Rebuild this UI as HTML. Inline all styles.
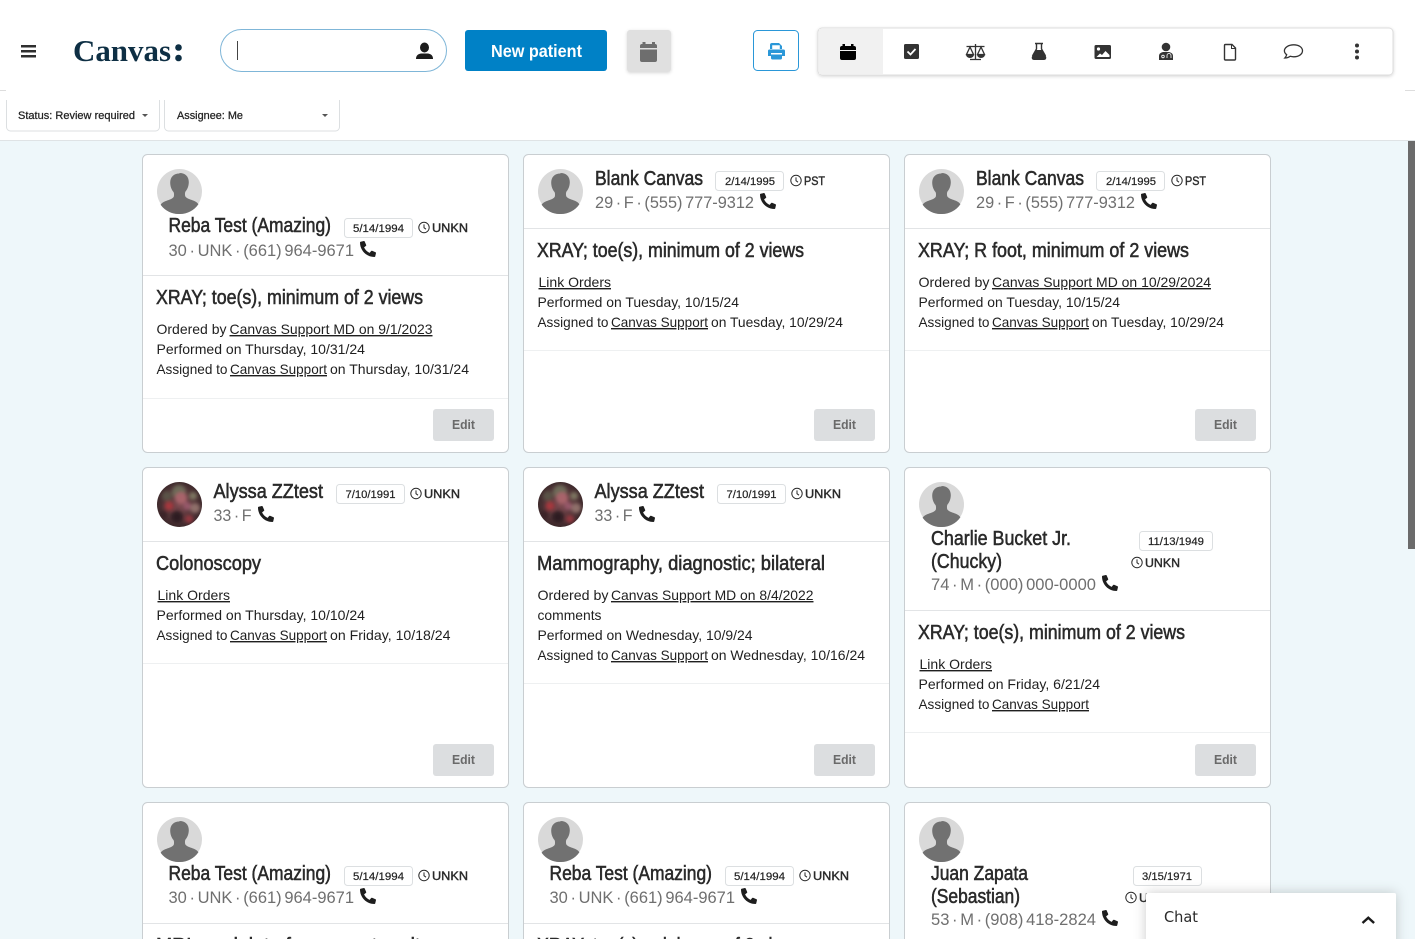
<!DOCTYPE html>
<html lang="en">
<head>
<meta charset="utf-8">
<title>Canvas</title>
<style>
html,body{margin:0;padding:0;width:1415px;height:939px;overflow:hidden;background:#eef7fa}
svg{display:block;font-family:"Liberation Sans",sans-serif}
.card{fill:#fff;stroke:#c9ced1;stroke-width:1}
.sep{stroke:#e2e4e6;stroke-width:1}
.sep2{stroke:#eef0f1;stroke-width:1}
.chip{fill:#fff;stroke:#dcdfe1;stroke-width:1}
.edit{fill:#dcdee0}
.n{font-size:20px;fill:#2a2a2a;stroke:#2a2a2a;stroke-width:.55px}
.s{font-size:17px;fill:#6f6f6f;word-spacing:-2px}
.t{font-size:20px;fill:#2a2a2a;stroke:#2a2a2a;stroke-width:.55px}
.l{font-size:14px;fill:#1f1f1f}
.u{font-size:14px;fill:#1f1f1f;text-decoration:underline}
.d{font-size:11px;fill:#222;stroke:#222;stroke-width:.2px}
.z{font-size:12px;fill:#2a2a2a;stroke:#2a2a2a;stroke-width:.4px}
.e{font-size:13px;font-weight:bold;fill:#6a6a6a}
.f{font-size:11px;fill:#222;stroke:#222;stroke-width:.25px}
</style>
</head>
<body>
<svg width="1415" height="939" viewBox="0 0 1415 939" xmlns="http://www.w3.org/2000/svg">
<defs>
<symbol id="av" viewBox="0 0 45 45">
<circle cx="22.500" cy="22.500" r="22.500" fill="#d9d9d9"/>
<path d="M22.500 4.500c-5.800 0-9.300 3.600-9.300 9 0 3.800 1.300 7.300 3.300 9.500.6.800.7 3.300.3 4.600-.5 1.500-2.800 2.600-6.300 3.800-3.400 1.200-5.600 2.400-6.900 4.300A22.500 22.500 0 0 0 22.500 45a22.500 22.500 0 0 0 18.900-9.800c-1.300-1.900-3.500-3.100-6.900-4.300-3.500-1.200-5.800-2.300-6.300-3.800-.4-1.300-.3-3.800.3-4.600 2-2.200 3.300-5.700 3.300-9.500 0-5.400-3.500-9-9.300-9z" fill="#717171"/>
</symbol>
<symbol id="ph" viewBox="0 0 512 512">
<g transform="translate(512 0) scale(-1 1)"><path fill="#1e1e1e" d="M493.400 24.600l-104-24c-11.300-2.600-22.900 3.300-27.500 13.900l-48 112c-4.200 9.800-1.400 21.300 6.900 28l60.600 49.600c-36 76.700-98.900 140.500-177.200 177.200l-49.600-60.600c-6.800-8.300-18.200-11.100-28-6.900l-112 48C3.900 366.500-2 378.100.6 389.400l24 104C27.100 504.200 36.700 512 48 512c256.100 0 464-207.500 464-464 0-11.200-7.700-20.900-18.600-23.400z"/></g>
</symbol>
<symbol id="ck" viewBox="0 0 12 12">
<circle cx="6" cy="6" r="5.200" fill="none" stroke="#2a2a2a" stroke-width="1"/>
<path d="M6 2.900V6.200L8 7.700" fill="none" stroke="#2a2a2a" stroke-width="1"/>
</symbol>
<radialGradient id="pg" cx=".5" cy=".5" r=".5"><stop offset="0" stop-color="#7d4a50"/><stop offset="1" stop-color="#3e2a2c"/></radialGradient>
<filter id="bl"><feGaussianBlur stdDeviation="1.800"/></filter>
<filter id="shadow" x="-10%" y="-30%" width="120%" height="160%"><feDropShadow dx="0" dy="1" stdDeviation="1.500" flood-color="#000" flood-opacity=".16"/></filter>
<filter id="chatsh" x="-15%" y="-50%" width="130%" height="200%"><feDropShadow dx="0" dy="0" stdDeviation="6" flood-color="#000" flood-opacity=".2"/></filter>
<clipPath id="pc"><circle cx="22.500" cy="22.500" r="22.500"/></clipPath>
<symbol id="photo" viewBox="0 0 45 45">
<g clip-path="url(#pc)">
<rect width="45" height="45" fill="url(#pg)"/>
<g filter="url(#bl)">
<circle cx="22" cy="10" r="7" fill="#6d6a58"/>
<circle cx="10" cy="14" r="5" fill="#5a5246"/>
<circle cx="24" cy="16" r="6" fill="#a8636a"/>
<circle cx="12" cy="24" r="4.500" fill="#a5383c"/>
<circle cx="36" cy="14" r="4" fill="#7b7460"/>
<circle cx="38" cy="26" r="5" fill="#8f6f6a"/>
<circle cx="30" cy="24" r="4" fill="#96586a"/>
<circle cx="32" cy="37" r="4" fill="#93383f"/>
<circle cx="20" cy="35" r="6" fill="#2d1c20"/>
<circle cx="6" cy="33" r="4" fill="#3a2226"/>
</g>
</g>
</symbol>
</defs>

<rect x="0" y="0" width="1415" height="140" fill="#fff"/>
<rect x="0" y="140" width="1415" height="1" fill="#dfe3e5"/>
<rect x="0" y="90" width="6" height="1" fill="#ddd"/>
<rect x="1405" y="90" width="10" height="1" fill="#ddd"/>

<!-- hamburger -->
<rect x="21" y="45" width="15" height="2.500" fill="#2f2f2f"/>
<rect x="21" y="50" width="15" height="2.500" fill="#2f2f2f"/>
<rect x="21" y="55" width="15" height="2.500" fill="#2f2f2f"/>

<!-- logo -->
<text x="73" y="61" font-family="Liberation Serif" font-size="31" font-weight="bold" fill="#0e2f44" textLength="98" lengthAdjust="spacingAndGlyphs">Canvas</text>
<circle cx="178.500" cy="47.500" r="3.300" fill="#0e2f44"/>
<circle cx="178.500" cy="58" r="3.300" fill="#0e2f44"/>

<!-- search -->
<rect x="220.500" y="29.500" width="226" height="42" rx="21" fill="#fff" stroke="#7fb6d8"/>
<rect x="237" y="41" width="1" height="19" fill="#444"/>
<ellipse cx="424.500" cy="47.500" rx="4.500" ry="5" fill="#1c1c1c"/>
<path d="M416 59c0-3.500 2-5 5-5.500h7c3 .5 5 2 5 5.500z" fill="#1c1c1c"/>

<!-- new patient -->
<rect x="465" y="30" width="142" height="41" rx="3" fill="#0081c6"/>
<text x="491" y="57" font-size="17.500" font-weight="bold" fill="#fff" textLength="91" lengthAdjust="spacingAndGlyphs">New patient</text>

<!-- calendar button -->
<rect x="627" y="30" width="44" height="42" rx="3" fill="#e0e0e0" filter="url(#shadow)"/>
<path d="M642.500 42h3v3h-3zM652 42h3v3h-3z" fill="#6e6e6e"/>
<path d="M640 46a2 2 0 0 1 2-2h13a2 2 0 0 1 2 2v2h-17zM640 49.500h17V60a2 2 0 0 1-2 2h-13a2 2 0 0 1-2-2z" fill="#6e6e6e"/>

<!-- print -->
<rect x="753.500" y="30.500" width="45" height="40" rx="4" fill="#fff" stroke="#2a97d8"/>
<g fill="#2a97d8">
<path d="M772 43h7l3 3v3h-2.200v-3.800h-7.600V49H770v-4a2 2 0 0 1 2-2z"/>
<path d="M769.500 49.500h14a1.500 1.500 0 0 1 1.500 1.500v5h-3v-3h-11v3h-3v-5a1.500 1.500 0 0 1 1.500-1.500z"/>
<path d="M771 54.500h11V58a1.500 1.500 0 0 1-1.500 1.500h-8A1.500 1.500 0 0 1 771 58z"/>
</g>

<!-- tab bar -->
<rect x="818" y="28" width="575" height="47" rx="4" fill="#fff" stroke="#ddd" filter="url(#shadow)"/>
<path d="M819 29h64v45h-64z" fill="#f1f1f1"/>
<!-- calendar -->
<path d="M842.500 44h2.500v3h-2.500zM851 44h2.500v3H851z" fill="#000"/>
<path d="M840 48a2 2 0 0 1 2-2h12a2 2 0 0 1 2 2v2h-16zM840 51h16v7a2 2 0 0 1-2 2h-12a2 2 0 0 1-2-2z" fill="#000"/>
<!-- check -->
<rect x="904" y="44" width="15" height="15" rx="1.500" fill="#333"/>
<path d="M907.500 51.500l3 3 5-5.500" fill="none" stroke="#fff" stroke-width="1.800"/>
<!-- scales -->
<g fill="none" stroke="#333" stroke-width="1.300">
<path d="M966.500 46.500h18M975.500 44v15M970 59.500h11"/>
<path d="M970 47l-3.500 7.500h7zM981 47l-3.500 7.500h7z"/>
</g>
<path d="M966 54.500h8a4 3.500 0 0 1-8 0zM977 54.500h8a4 3.500 0 0 1-8 0z" fill="#333"/>
<!-- flask -->
<path d="M1035 43.500h8M1036.500 44v5l-4 7" fill="none" stroke="#333" stroke-width="1.400"/>
<path d="M1041.500 44v5l4 7" fill="none" stroke="#333" stroke-width="1.400"/>
<path d="M1035.500 50h7l3.500 6.500c.8 1.800-.2 3.500-2 3.500h-10c-1.800 0-2.800-1.700-2-3.500z" fill="#333"/>
<!-- image -->
<rect x="1094.500" y="45" width="16.500" height="14" rx="1.500" fill="#333"/>
<circle cx="1098.500" cy="49" r="1.600" fill="#fff"/>
<path d="M1096.500 57l3.500-3.500 2 1.500 3.500-4 4 4v2z" fill="#fff"/>
<!-- doctor -->
<circle cx="1166" cy="47" r="4.300" fill="#333"/>
<path d="M1159 60v-4c0-2.500 2-3.500 4-4h6c2 .5 4 1.500 4 4v4z" fill="#333"/>
<g fill="none" stroke="#fff" stroke-width=".8"><circle cx="1163" cy="56.500" r="1.300"/><path d="M1167 58v-2.500a2 2 0 0 1 4 0V58"/></g>
<!-- file -->
<path d="M1224.500 45.500a1 1 0 0 1 1-1h6.500l3.500 3.500v11a1 1 0 0 1-1 1h-9a1 1 0 0 1-1-1z" fill="none" stroke="#333" stroke-width="1.400"/>
<path d="M1231.500 44.500v4h4" fill="none" stroke="#333" stroke-width="1"/>
<!-- speech -->
<path d="M1293.800 44.800c5 0 8.700 2.600 8.700 6s-3.700 6-8.700 6c-1.300 0-2.500-.2-3.600-.5-1.200 1-3 1.700-5.400 1.700.9-1 1.700-2.100 1.900-3.300-1.500-1-2.300-2.400-2.300-3.900 0-3.400 4.200-6 9.400-6z" fill="none" stroke="#333" stroke-width="1.300"/>
<!-- dots -->
<circle cx="1357" cy="45.500" r="2" fill="#333"/><circle cx="1357" cy="51.500" r="2" fill="#333"/><circle cx="1357" cy="57.500" r="2" fill="#333"/>

<!-- filters -->
<path d="M6.500 100v27a4 4 0 0 0 4 4h145a4 4 0 0 0 4-4v-27" fill="#fff" stroke="#dcdfe1"/>
<path d="M164.500 100v27a4 4 0 0 0 4 4h167a4 4 0 0 0 4-4v-27" fill="#fff" stroke="#dcdfe1"/>
<text class="f" x="18" y="119" textLength="117" lengthAdjust="spacingAndGlyphs">Status: Review required</text>
<path d="M142 114h6l-3 3z" fill="#555"/>
<text class="f" x="177" y="119" textLength="66" lengthAdjust="spacingAndGlyphs">Assignee: Me</text>
<path d="M322 114h6l-3 3z" fill="#555"/>

<!-- CARD 1 -->
<rect class="card" x="142.500" y="154.500" width="366" height="298" rx="5"/>
<use href="#av" x="157" y="169" width="45" height="45"/>
<text class="n" x="168.500" y="232" textLength="162.500" lengthAdjust="spacingAndGlyphs">Reba Test (Amazing)</text>
<rect class="chip" x="344.500" y="218.500" width="68" height="19" rx="3"/>
<text class="d" x="353" y="232" textLength="51" lengthAdjust="spacingAndGlyphs">5/14/1994</text>
<use href="#ck" x="418" y="221.500" width="12" height="12"/>
<text class="z" x="432" y="232" textLength="36" lengthAdjust="spacingAndGlyphs">UNKN</text>
<text class="s" x="168.500" y="256" textLength="185.500" lengthAdjust="spacingAndGlyphs">30 · UNK · (661) 964-9671</text>
<use href="#ph" x="360" y="241" width="16" height="16"/>
<line class="sep" x1="143" x2="508" y1="275.500" y2="275.500"/>
<text class="t" x="156" y="304" textLength="267" lengthAdjust="spacingAndGlyphs">XRAY; toe(s), minimum of 2 views</text>
<text class="l" x="156.500" y="334" textLength="70" lengthAdjust="spacingAndGlyphs">Ordered by</text>
<text class="u" x="229.500" y="334" textLength="203" lengthAdjust="spacingAndGlyphs">Canvas Support MD on 9/1/2023</text>
<text class="l" x="156.500" y="354" textLength="208.500" lengthAdjust="spacingAndGlyphs">Performed on Thursday, 10/31/24</text>
<text class="l" x="156.500" y="374" textLength="71" lengthAdjust="spacingAndGlyphs">Assigned to</text>
<text class="u" x="230" y="374" textLength="97" lengthAdjust="spacingAndGlyphs">Canvas Support</text>
<text class="l" x="330" y="374" textLength="139" lengthAdjust="spacingAndGlyphs">on Thursday, 10/31/24</text>
<line class="sep2" x1="143" x2="508" y1="398.500" y2="398.500"/>
<rect class="edit" x="433" y="409" width="61" height="32" rx="3"/>
<text class="e" x="452" y="429" textLength="23" lengthAdjust="spacingAndGlyphs">Edit</text>

<!-- CARD 2 -->
<rect class="card" x="523.500" y="154.500" width="366" height="298" rx="5"/>
<use href="#av" x="538" y="169" width="45" height="45"/>
<text class="n" x="595" y="185" textLength="108" lengthAdjust="spacingAndGlyphs">Blank Canvas</text>
<rect class="chip" x="715.500" y="171.500" width="68" height="19" rx="3"/>
<text class="d" x="725" y="185" textLength="50" lengthAdjust="spacingAndGlyphs">2/14/1995</text>
<use href="#ck" x="790" y="174.500" width="12" height="12"/>
<text class="z" x="804" y="185" textLength="21" lengthAdjust="spacingAndGlyphs">PST</text>
<text class="s" x="595" y="208" textLength="159" lengthAdjust="spacingAndGlyphs">29 · F · (555) 777-9312</text>
<use href="#ph" x="760" y="193" width="16" height="16"/>
<line class="sep" x1="524" x2="889" y1="228.500" y2="228.500"/>
<text class="t" x="537" y="257" textLength="267" lengthAdjust="spacingAndGlyphs">XRAY; toe(s), minimum of 2 views</text>
<text class="u" x="538.500" y="287" textLength="72.500" lengthAdjust="spacingAndGlyphs">Link Orders</text>
<text class="l" x="537.500" y="307" textLength="201.500" lengthAdjust="spacingAndGlyphs">Performed on Tuesday, 10/15/24</text>
<text class="l" x="537.500" y="327" textLength="71" lengthAdjust="spacingAndGlyphs">Assigned to</text>
<text class="u" x="611" y="327" textLength="97" lengthAdjust="spacingAndGlyphs">Canvas Support</text>
<text class="l" x="711" y="327" textLength="132" lengthAdjust="spacingAndGlyphs">on Tuesday, 10/29/24</text>
<line class="sep2" x1="524" x2="889" y1="350.500" y2="350.500"/>
<rect class="edit" x="814" y="409" width="61" height="32" rx="3"/>
<text class="e" x="833" y="429" textLength="23" lengthAdjust="spacingAndGlyphs">Edit</text>

<!-- CARD 3 -->
<rect class="card" x="904.500" y="154.500" width="366" height="298" rx="5"/>
<use href="#av" x="919" y="169" width="45" height="45"/>
<text class="n" x="976" y="185" textLength="108" lengthAdjust="spacingAndGlyphs">Blank Canvas</text>
<rect class="chip" x="1096.500" y="171.500" width="68" height="19" rx="3"/>
<text class="d" x="1106" y="185" textLength="50" lengthAdjust="spacingAndGlyphs">2/14/1995</text>
<use href="#ck" x="1171" y="174.500" width="12" height="12"/>
<text class="z" x="1185" y="185" textLength="21" lengthAdjust="spacingAndGlyphs">PST</text>
<text class="s" x="976" y="208" textLength="159" lengthAdjust="spacingAndGlyphs">29 · F · (555) 777-9312</text>
<use href="#ph" x="1141" y="193" width="16" height="16"/>
<line class="sep" x1="905" x2="1270" y1="228.500" y2="228.500"/>
<text class="t" x="918" y="257" textLength="271" lengthAdjust="spacingAndGlyphs">XRAY; R foot, minimum of 2 views</text>
<text class="l" x="918.500" y="287" textLength="71" lengthAdjust="spacingAndGlyphs">Ordered by</text>
<text class="u" x="992" y="287" textLength="219" lengthAdjust="spacingAndGlyphs">Canvas Support MD on 10/29/2024</text>
<text class="l" x="918.500" y="307" textLength="201.500" lengthAdjust="spacingAndGlyphs">Performed on Tuesday, 10/15/24</text>
<text class="l" x="918.500" y="327" textLength="71" lengthAdjust="spacingAndGlyphs">Assigned to</text>
<text class="u" x="992" y="327" textLength="97" lengthAdjust="spacingAndGlyphs">Canvas Support</text>
<text class="l" x="1092" y="327" textLength="132" lengthAdjust="spacingAndGlyphs">on Tuesday, 10/29/24</text>
<line class="sep2" x1="905" x2="1270" y1="350.500" y2="350.500"/>
<rect class="edit" x="1195" y="409" width="61" height="32" rx="3"/>
<text class="e" x="1214" y="429" textLength="23" lengthAdjust="spacingAndGlyphs">Edit</text>

<!-- CARD 4 -->
<rect class="card" x="142.500" y="467.500" width="366" height="320" rx="5"/>
<use href="#photo" x="157" y="482" width="45" height="45"/>
<text class="n" x="213.500" y="498" textLength="109.500" lengthAdjust="spacingAndGlyphs">Alyssa ZZtest</text>
<rect class="chip" x="336.500" y="484.500" width="68" height="19" rx="3"/>
<text class="d" x="345.500" y="498" textLength="50" lengthAdjust="spacingAndGlyphs">7/10/1991</text>
<use href="#ck" x="410" y="487.500" width="12" height="12"/>
<text class="z" x="424" y="498" textLength="36" lengthAdjust="spacingAndGlyphs">UNKN</text>
<text class="s" x="213.500" y="521" textLength="38" lengthAdjust="spacingAndGlyphs">33 · F</text>
<use href="#ph" x="258" y="506" width="16" height="16"/>
<line class="sep" x1="143" x2="508" y1="541.500" y2="541.500"/>
<text class="t" x="156" y="570" textLength="105" lengthAdjust="spacingAndGlyphs">Colonoscopy</text>
<text class="u" x="157.500" y="600" textLength="72.500" lengthAdjust="spacingAndGlyphs">Link Orders</text>
<text class="l" x="156.500" y="620" textLength="208.500" lengthAdjust="spacingAndGlyphs">Performed on Thursday, 10/10/24</text>
<text class="l" x="156.500" y="640" textLength="71" lengthAdjust="spacingAndGlyphs">Assigned to</text>
<text class="u" x="230" y="640" textLength="97" lengthAdjust="spacingAndGlyphs">Canvas Support</text>
<text class="l" x="330" y="640" textLength="120.500" lengthAdjust="spacingAndGlyphs">on Friday, 10/18/24</text>
<line class="sep2" x1="143" x2="508" y1="663.500" y2="663.500"/>
<rect class="edit" x="433" y="744" width="61" height="32" rx="3"/>
<text class="e" x="452" y="764" textLength="23" lengthAdjust="spacingAndGlyphs">Edit</text>

<!-- CARD 5 -->
<rect class="card" x="523.500" y="467.500" width="366" height="320" rx="5"/>
<use href="#photo" x="538" y="482" width="45" height="45"/>
<text class="n" x="594.500" y="498" textLength="109.500" lengthAdjust="spacingAndGlyphs">Alyssa ZZtest</text>
<rect class="chip" x="717.500" y="484.500" width="68" height="19" rx="3"/>
<text class="d" x="726.500" y="498" textLength="50" lengthAdjust="spacingAndGlyphs">7/10/1991</text>
<use href="#ck" x="791" y="487.500" width="12" height="12"/>
<text class="z" x="805" y="498" textLength="36" lengthAdjust="spacingAndGlyphs">UNKN</text>
<text class="s" x="594.500" y="521" textLength="38" lengthAdjust="spacingAndGlyphs">33 · F</text>
<use href="#ph" x="639" y="506" width="16" height="16"/>
<line class="sep" x1="524" x2="889" y1="541.500" y2="541.500"/>
<text class="t" x="537" y="570" textLength="288" lengthAdjust="spacingAndGlyphs">Mammography, diagnostic; bilateral</text>
<text class="l" x="537.500" y="600" textLength="71" lengthAdjust="spacingAndGlyphs">Ordered by</text>
<text class="u" x="611" y="600" textLength="202.500" lengthAdjust="spacingAndGlyphs">Canvas Support MD on 8/4/2022</text>
<text class="l" x="537.500" y="620" textLength="64" lengthAdjust="spacingAndGlyphs">comments</text>
<text class="l" x="537.500" y="640" textLength="215" lengthAdjust="spacingAndGlyphs">Performed on Wednesday, 10/9/24</text>
<text class="l" x="537.500" y="660" textLength="71" lengthAdjust="spacingAndGlyphs">Assigned to</text>
<text class="u" x="611" y="660" textLength="97" lengthAdjust="spacingAndGlyphs">Canvas Support</text>
<text class="l" x="711" y="660" textLength="154" lengthAdjust="spacingAndGlyphs">on Wednesday, 10/16/24</text>
<line class="sep2" x1="524" x2="889" y1="683.500" y2="683.500"/>
<rect class="edit" x="814" y="744" width="61" height="32" rx="3"/>
<text class="e" x="833" y="764" textLength="23" lengthAdjust="spacingAndGlyphs">Edit</text>

<!-- CARD 6 -->
<rect class="card" x="904.500" y="467.500" width="366" height="320" rx="5"/>
<use href="#av" x="919" y="482" width="45" height="45"/>
<text class="n" x="931" y="545" textLength="140" lengthAdjust="spacingAndGlyphs">Charlie Bucket Jr.</text>
<text class="n" x="931" y="568" textLength="71" lengthAdjust="spacingAndGlyphs">(Chucky)</text>
<rect class="chip" x="1139.500" y="531.500" width="73" height="19" rx="3"/>
<text class="d" x="1148" y="545" textLength="56" lengthAdjust="spacingAndGlyphs">11/13/1949</text>
<use href="#ck" x="1131" y="556.500" width="12" height="12"/>
<text class="z" x="1145" y="567" textLength="35" lengthAdjust="spacingAndGlyphs">UNKN</text>
<text class="s" x="931" y="590" textLength="165" lengthAdjust="spacingAndGlyphs">74 · M · (000) 000-0000</text>
<use href="#ph" x="1102" y="575" width="16" height="16"/>
<line class="sep" x1="905" x2="1270" y1="610.500" y2="610.500"/>
<text class="t" x="918" y="639" textLength="267" lengthAdjust="spacingAndGlyphs">XRAY; toe(s), minimum of 2 views</text>
<text class="u" x="919.500" y="669" textLength="72.500" lengthAdjust="spacingAndGlyphs">Link Orders</text>
<text class="l" x="918.500" y="689" textLength="181.500" lengthAdjust="spacingAndGlyphs">Performed on Friday, 6/21/24</text>
<text class="l" x="918.500" y="709" textLength="71" lengthAdjust="spacingAndGlyphs">Assigned to</text>
<text class="u" x="992" y="709" textLength="97" lengthAdjust="spacingAndGlyphs">Canvas Support</text>
<line class="sep2" x1="905" x2="1270" y1="732.500" y2="732.500"/>
<rect class="edit" x="1195" y="744" width="61" height="32" rx="3"/>
<text class="e" x="1214" y="764" textLength="23" lengthAdjust="spacingAndGlyphs">Edit</text>

<!-- CARD 7 -->
<rect class="card" x="142.500" y="802.500" width="366" height="160" rx="5"/>
<use href="#av" x="157" y="817" width="45" height="45"/>
<text class="n" x="168.500" y="880" textLength="162.500" lengthAdjust="spacingAndGlyphs">Reba Test (Amazing)</text>
<rect class="chip" x="344.500" y="866.500" width="68" height="19" rx="3"/>
<text class="d" x="353" y="880" textLength="51" lengthAdjust="spacingAndGlyphs">5/14/1994</text>
<use href="#ck" x="418" y="869.500" width="12" height="12"/>
<text class="z" x="432" y="880" textLength="36" lengthAdjust="spacingAndGlyphs">UNKN</text>
<text class="s" x="168.500" y="903" textLength="185.500" lengthAdjust="spacingAndGlyphs">30 · UNK · (661) 964-9671</text>
<use href="#ph" x="360" y="888" width="16" height="16"/>
<line class="sep" x1="143" x2="508" y1="923.500" y2="923.500"/>
<text class="t" x="156" y="952" textLength="274" lengthAdjust="spacingAndGlyphs">MRI any joint of upper extremity</text>

<!-- CARD 8 -->
<rect class="card" x="523.500" y="802.500" width="366" height="160" rx="5"/>
<use href="#av" x="538" y="817" width="45" height="45"/>
<text class="n" x="549.500" y="880" textLength="162.500" lengthAdjust="spacingAndGlyphs">Reba Test (Amazing)</text>
<rect class="chip" x="725.500" y="866.500" width="68" height="19" rx="3"/>
<text class="d" x="734" y="880" textLength="51" lengthAdjust="spacingAndGlyphs">5/14/1994</text>
<use href="#ck" x="799" y="869.500" width="12" height="12"/>
<text class="z" x="813" y="880" textLength="36" lengthAdjust="spacingAndGlyphs">UNKN</text>
<text class="s" x="549.500" y="903" textLength="185.500" lengthAdjust="spacingAndGlyphs">30 · UNK · (661) 964-9671</text>
<use href="#ph" x="741" y="888" width="16" height="16"/>
<line class="sep" x1="524" x2="889" y1="923.500" y2="923.500"/>
<text class="t" x="537" y="952" textLength="267" lengthAdjust="spacingAndGlyphs">XRAY; toe(s), minimum of 2 views</text>

<!-- CARD 9 -->
<rect class="card" x="904.500" y="802.500" width="366" height="160" rx="5"/>
<use href="#av" x="919" y="817" width="45" height="45"/>
<text class="n" x="931" y="880" textLength="97" lengthAdjust="spacingAndGlyphs">Juan Zapata</text>
<text class="n" x="931" y="903" textLength="89" lengthAdjust="spacingAndGlyphs">(Sebastian)</text>
<rect class="chip" x="1133.500" y="866.500" width="68" height="19" rx="3"/>
<text class="d" x="1142" y="880" textLength="50" lengthAdjust="spacingAndGlyphs">3/15/1971</text>
<use href="#ck" x="1125" y="891.500" width="12" height="12"/>
<text class="z" x="1139" y="902" textLength="36" lengthAdjust="spacingAndGlyphs">UNKN</text>
<text class="s" x="931" y="925" textLength="165" lengthAdjust="spacingAndGlyphs">53 · M · (908) 418-2824</text>
<use href="#ph" x="1102" y="910" width="16" height="16"/>

<!-- chat -->
<rect x="1146" y="893" width="250" height="60" rx="2" fill="#fff" filter="url(#chatsh)"/>
<text x="1164" y="922" font-size="15" font-family="DejaVu Sans" fill="#2a2a2a" textLength="34" lengthAdjust="spacingAndGlyphs">Chat</text>
<path d="M1362.500 923l5.800-5.300 5.800 5.300" fill="none" stroke="#1a1a1a" stroke-width="2.400"/>

<!-- scrollbar -->
<rect x="1408" y="141" width="7" height="408" fill="#6b6b6b"/>
</svg>
</body>
</html>
